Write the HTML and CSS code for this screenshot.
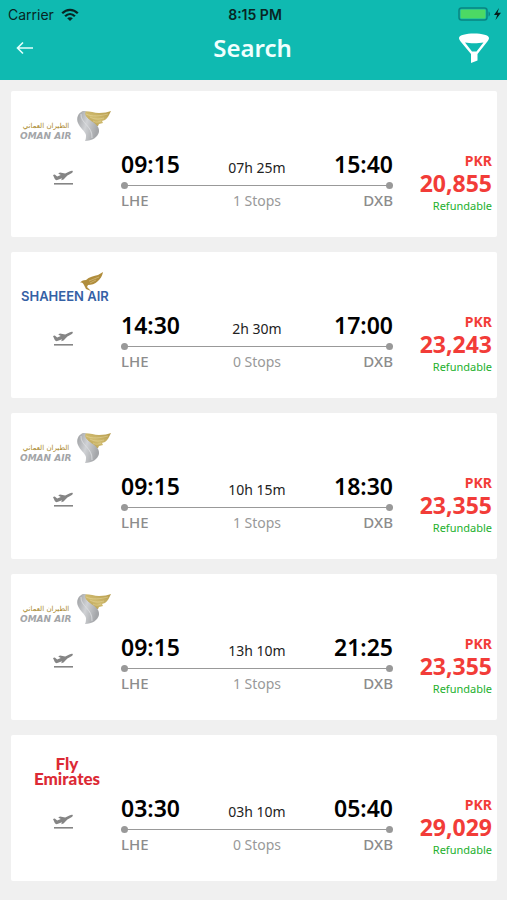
FILE: index.html
```
<!DOCTYPE html>
<html lang="en">
<head>
	<meta charset="UTF-8">
	<meta name="viewport" content="width=device-width, initial-scale=1">
	<title>Search</title>
	<link rel="stylesheet" href="styles.css">
</head>
<body>

<!-- shapes shared by the flight cards -->
<svg class="shapes" width="0" height="0" aria-hidden="true">
	<defs>
		<linearGradient id="gold" x1="0" y1="1" x2="1" y2="0">
			<stop offset="0" stop-color="#a98f3f"/>
			<stop offset="0.5" stop-color="#d0bb70"/>
			<stop offset="1" stop-color="#b59a4a"/>
		</linearGradient>
		<linearGradient id="silver" x1="0" y1="0" x2="1" y2="0.4">
			<stop offset="0" stop-color="#9b9da0"/>
			<stop offset="0.5" stop-color="#d0d2d5"/>
			<stop offset="1" stop-color="#a4a6a9"/>
		</linearGradient>
	</defs>
	<symbol id="oman-wing" viewBox="0 0 92 40">
		<path fill="url(#gold)" d="M61 6C67 4 73 7 79 7C84 7 88 6 91 5C89 9 88 12 85 14L82 15L83 17L79 18L78 20L74 20C72 16 66 11 61 6Z"/>
		<path fill="none" stroke="#f0e2b0" stroke-width="0.4" d="M66 8C72 11 80 10 88 8M70 11C75 14 80 13 84 12M73 15C76 17 79 16 81 15"/>
		<path fill="url(#silver)" d="M63 5C58 7 56 12 58 17C60 22 65 25 66 29C66 31 66 33 65 35C72 35 78 31 79 26C80 20 74 17 70 14C66 11 64 8 66 5Z"/>
		<path fill="none" stroke="#e0e1e3" stroke-width="0.8" d="M61 8C60 17 73 20 72 32"/>
	</symbol>
	<symbol id="takeoff" viewBox="0 0 20 16">
		<path fill="#858585" d="M0 5L1.800 4.500L4.200 6.600L7.800 5L5.200 3.400L7 2.600L12.200 3.400L17 1.200C18.300 0.600 19.500 0.500 19.800 1.200C20 2 19.200 2.900 18 3.500L14.400 5.600L10.500 9.600L8.200 10.200L9 8.300L5 9.800C3.500 10.400 2.400 10.200 1.800 9Z"/>
		<path fill="#858585" d="M1 13H20V14.600H1Z"/>
	</symbol>
</svg>

<header class="top">
	<div class="status">
		<div class="status-left">
			<span>Carrier</span>
			<svg width="18" height="13" viewBox="0 0 18 13" aria-hidden="true">
				<g fill="none" stroke="#082523" stroke-width="2.300">
					<path d="M1.200 5.300C5.800 0.700 12.200 0.700 16.800 5.300"/>
					<path d="M4.100 8.200C7 5.300 11 5.300 13.900 8.200"/>
				</g>
				<path fill="#082523" d="M6.200 10.300C7.800 8.800 10.200 8.800 11.800 10.300L9 13Z"/>
			</svg>
		</div>
		<time class="clock">8:15 PM</time>
		<div class="status-right">
			<svg width="44" height="14" viewBox="0 0 44 14" aria-hidden="true">
				<rect x="1" y="1" width="28" height="12" rx="2.500" fill="none" stroke="#0a8580" stroke-width="1.500"/>
				<rect x="2.500" y="2.500" width="25" height="9" rx="1" fill="#4cd964"/>
				<path fill="#0a8580" d="M30.500 4.500C32.500 5 32.500 9 30.500 9.500Z"/>
				<path fill="#061c1b" d="M41 1L36 8H39.200L37.500 13L43 5.800H39.500Z"/>
			</svg>
		</div>
	</div>
	<nav class="bar">
		<button class="back" aria-label="Back">
			<svg width="18" height="14" viewBox="0 0 18 14" aria-hidden="true">
				<path fill="none" stroke="#e4fffc" stroke-width="1.600" d="M17 7H1.500M7 1.500L1.500 7L7 12.500"/>
			</svg>
		</button>
		<h1>Search</h1>
		<button class="filter" aria-label="Filter">
			<svg width="30" height="30" viewBox="0 0 30 30" aria-hidden="true">
				<path fill="#fff" fill-rule="evenodd" d="M0 5C0 2 7 0.500 15 0.500S30 2 30 5C30 6.500 29 7.500 28 9L18.500 21V27.500L12 30V21L2 9C1 7.500 0 6.500 0 5ZM6 9.500L13 18.500H17.500L24.500 9.500C19 10.500 11 10.500 6 9.500Z"/>
			</svg>
		</button>
	</nav>
</header>

<main class="flights">
	<article class="flight">
		<svg class="logo" viewBox="0 0 92 40" role="img" aria-label="Oman Air">
			<text class="oman-arabic" x="26" y="22" text-anchor="middle">الطيران العماني</text>
			<text class="oman-latin" x="0" y="33">OMAN AIR</text>
			<use href="#oman-wing"/>
		</svg>
		<svg class="takeoff" aria-hidden="true"><use href="#takeoff"/></svg>
		<div class="leg">
			<div class="times"><time>09:15</time><span class="duration">07h 25m</span><time>15:40</time></div>
			<div class="track"></div>
			<div class="places"><span>LHE</span><span class="stops">1 Stops</span><span>DXB</span></div>
		</div>
		<div class="price">
			<span class="currency">PKR</span>
			<strong>20,855</strong>
			<span class="refund">Refundable</span>
		</div>
	</article>

	<article class="flight">
		<svg class="logo" viewBox="0 0 92 40" role="img" aria-label="Shaheen Air">
			<text class="shaheen-name" x="1" y="34">SHAHEEN AIR</text>
			<path fill="#b08d3c" d="M60 16C61 14 63 13 66 13C69 10 74 9 78 8L83 5C82 10 80 12 78 14C75 17 71 18 68 18L67 20L71 24L66 22L64 18C63 16 62 15 60 16Z"/>
			<path fill="none" stroke="#e5d09a" stroke-width="0.5" d="M69 14L79 10M70 16L76 13"/>
		</svg>
		<svg class="takeoff" aria-hidden="true"><use href="#takeoff"/></svg>
		<div class="leg">
			<div class="times"><time>14:30</time><span class="duration">2h 30m</span><time>17:00</time></div>
			<div class="track"></div>
			<div class="places"><span>LHE</span><span class="stops">0 Stops</span><span>DXB</span></div>
		</div>
		<div class="price">
			<span class="currency">PKR</span>
			<strong>23,243</strong>
			<span class="refund">Refundable</span>
		</div>
	</article>

	<article class="flight">
		<svg class="logo" viewBox="0 0 92 40" role="img" aria-label="Oman Air">
			<text class="oman-arabic" x="26" y="22" text-anchor="middle">الطيران العماني</text>
			<text class="oman-latin" x="0" y="33">OMAN AIR</text>
			<use href="#oman-wing"/>
		</svg>
		<svg class="takeoff" aria-hidden="true"><use href="#takeoff"/></svg>
		<div class="leg">
			<div class="times"><time>09:15</time><span class="duration">10h 15m</span><time>18:30</time></div>
			<div class="track"></div>
			<div class="places"><span>LHE</span><span class="stops">1 Stops</span><span>DXB</span></div>
		</div>
		<div class="price">
			<span class="currency">PKR</span>
			<strong>23,355</strong>
			<span class="refund">Refundable</span>
		</div>
	</article>

	<article class="flight">
		<svg class="logo" viewBox="0 0 92 40" role="img" aria-label="Oman Air">
			<text class="oman-arabic" x="26" y="22" text-anchor="middle">الطيران العماني</text>
			<text class="oman-latin" x="0" y="33">OMAN AIR</text>
			<use href="#oman-wing"/>
		</svg>
		<svg class="takeoff" aria-hidden="true"><use href="#takeoff"/></svg>
		<div class="leg">
			<div class="times"><time>09:15</time><span class="duration">13h 10m</span><time>21:25</time></div>
			<div class="track"></div>
			<div class="places"><span>LHE</span><span class="stops">1 Stops</span><span>DXB</span></div>
		</div>
		<div class="price">
			<span class="currency">PKR</span>
			<strong>23,355</strong>
			<span class="refund">Refundable</span>
		</div>
	</article>

	<article class="flight">
		<svg class="logo" viewBox="0 0 92 40" role="img" aria-label="Fly Emirates">
			<text class="emirates-name" x="47" y="20" text-anchor="middle">Fly</text>
			<text class="emirates-name" x="47" y="35" text-anchor="middle">Emirates</text>
		</svg>
		<svg class="takeoff" aria-hidden="true"><use href="#takeoff"/></svg>
		<div class="leg">
			<div class="times"><time>03:30</time><span class="duration">03h 10m</span><time>05:40</time></div>
			<div class="track"></div>
			<div class="places"><span>LHE</span><span class="stops">0 Stops</span><span>DXB</span></div>
		</div>
		<div class="price">
			<span class="currency">PKR</span>
			<strong>29,029</strong>
			<span class="refund">Refundable</span>
		</div>
	</article>
</main>

</body>
</html>
```
FILE: styles.css
```
:root {
	--teal: #0fbab1;
	--page: #f0f0f0;
	--grey: #999999;
	--red: #f23c38;
	--green: #22b02c;
}

* {
	box-sizing: border-box;
}

body {
	margin: 0;
	background-color: var(--page);
	font-family: "Noto Sans", "Open Sans", sans-serif;
	color: #000;
}

.shapes {
	position: absolute;
}

/* header */
.top {
	background-color: var(--teal);
	padding-bottom: 12px;
}

.status {
	display: grid;
	grid-template-columns: 1fr auto 1fr;
	align-items: center;
	height: 28px;
	padding: 0 5px 0 8px;
	font-family: Inter, Roboto, sans-serif;
	font-size: 14px;
	color: #082523;
}

.status-left {
	display: flex;
	align-items: center;
	gap: 7px;
}

.status-right {
	display: flex;
	justify-content: flex-end;
}

.clock {
	font-weight: 600;
}

.bar {
	display: grid;
	grid-template-columns: 1fr auto 1fr;
	align-items: center;
	height: 40px;
	padding: 0 18px 0 16px;
}

.bar button {
	display: flex;
	border: 0;
	padding: 0;
	background: none;
	cursor: pointer;
}

.filter {
	justify-self: end;
}

h1 {
	margin: 0;
	font-size: 24px;
	font-weight: 600;
	line-height: 32px;
	color: #f0fffe;
}

/* list of flights */
.flights {
	display: flex;
	flex-direction: column;
	gap: 15px;
	padding: 11px 10px 19px 11px;
}

.flight {
	display: grid;
	grid-template-columns: 92px 1fr 73px;
	grid-template-rows: 44px auto;
	padding: 15px 5px 19px 9px;
	background-color: #fff;
	border-radius: 2px;
}

.logo {
	width: 92px;
	height: 40px;
}

.takeoff {
	grid-column: 1;
	grid-row: 2;
	width: 20px;
	height: 16px;
	margin: 20px 0 0 33px;
}

.leg {
	grid-column: 2;
	grid-row: 2;
	margin: 0 26px 0 9px;
}

.times, .places {
	display: grid;
	grid-template-columns: 1fr auto 1fr;
	align-items: baseline;
}

.times {
	font-size: 23px;
	font-weight: 600;
	line-height: 28px;
}

.times :last-child, .places :last-child {
	text-align: right;
}

.duration {
	font-size: 14px;
	font-weight: 400;
	color: #222;
}

/* dot, line, dot */
.track {
	display: flex;
	align-items: center;
	height: 7px;
	background: linear-gradient(var(--grey), var(--grey)) center / 100% 1px no-repeat;
	justify-content: space-between;
}

.track::before, .track::after {
	content: "";
	width: 7px;
	height: 7px;
	border-radius: 50%;
	background-color: var(--grey);
}

.places {
	font-size: 15px;
	font-weight: 500;
	line-height: 22px;
	color: #8c8c8c;
}

.stops {
	font-size: 14px;
	font-weight: 400;
	color: var(--grey);
}

.price {
	grid-column: 3;
	grid-row: 2;
	display: flex;
	flex-direction: column;
	align-items: flex-end;
	color: var(--red);
}

.currency {
	font-size: 14px;
	font-weight: 700;
	line-height: 22px;
}

.price strong {
	font-size: 23px;
	font-weight: 700;
	line-height: 22px;
}

.refund {
	font-size: 11px;
	line-height: 24px;
	color: var(--green);
}

/* airline names */
.oman-arabic {
	font: 7px "DejaVu Sans", sans-serif;
	fill: #a8861f;
}

.oman-latin {
	font: italic bold 9px "DejaVu Sans", sans-serif;
	fill: #a3a5a8;
}

.shaheen-name {
	font: 600 13px Inter, sans-serif;
	fill: #3561a5;
}

.emirates-name {
	font: 900 17px Lato, sans-serif;
	fill: #dc2a35;
}
```
